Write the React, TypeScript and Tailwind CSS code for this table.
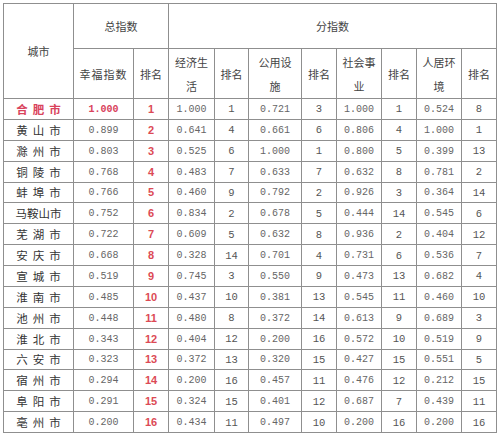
import React from "react";

type Row = [string, string, number, string, number, string, number, string, number, string, number];

const rows: Row[] = [
  ["合肥市", "1.000", 1, "1.000", 1, "0.721", 3, "1.000", 1, "0.524", 8],
  ["黄山市", "0.899", 2, "0.641", 4, "0.661", 6, "0.806", 4, "1.000", 1],
  ["滁州市", "0.803", 3, "0.525", 6, "1.000", 1, "0.800", 5, "0.399", 13],
  ["铜陵市", "0.768", 4, "0.483", 7, "0.633", 7, "0.632", 8, "0.781", 2],
  ["蚌埠市", "0.766", 5, "0.460", 9, "0.792", 2, "0.926", 3, "0.364", 14],
  ["马鞍山市", "0.752", 6, "0.834", 2, "0.678", 5, "0.444", 14, "0.545", 6],
  ["芜湖市", "0.722", 7, "0.609", 5, "0.632", 8, "0.936", 2, "0.404", 12],
  ["安庆市", "0.668", 8, "0.328", 14, "0.701", 4, "0.731", 6, "0.536", 7],
  ["宣城市", "0.519", 9, "0.745", 3, "0.550", 9, "0.473", 13, "0.682", 4],
  ["淮南市", "0.485", 10, "0.437", 10, "0.381", 13, "0.545", 11, "0.460", 10],
  ["池州市", "0.448", 11, "0.480", 8, "0.372", 14, "0.613", 9, "0.689", 3],
  ["淮北市", "0.343", 12, "0.404", 12, "0.200", 16, "0.572", 10, "0.519", 9],
  ["六安市", "0.323", 13, "0.372", 13, "0.320", 15, "0.427", 15, "0.551", 5],
  ["宿州市", "0.294", 14, "0.200", 16, "0.457", 11, "0.476", 12, "0.212", 15],
  ["阜阳市", "0.291", 15, "0.324", 15, "0.401", 12, "0.687", 7, "0.439", 11],
  ["亳州市", "0.200", 16, "0.434", 11, "0.497", 10, "0.200", 16, "0.200", 16],
];

const cjk = "font-['Noto_Sans_CJK_SC','Noto_Sans',sans-serif]";
const mono = "font-['Liberation_Mono','DejaVu_Sans_Mono',monospace]";
const cell = "border border-[#8f8f8f] p-0 text-center align-middle";

function City({ name, red }: { name: string; red: boolean }) {
  const chars = name.split("");
  return (
    <div
      className={`flex justify-center ${chars.length === 3 ? "gap-[5px]" : "gap-0"} ${cjk} text-[11.5px] leading-[14px] ${
        red ? "font-bold text-[#d9435c]" : "text-[#333]"
      }`}
    >
      {chars.map((c, i) => (
        <span key={i}>{c}</span>
      ))}
    </div>
  );
}

function Head({ lines }: { lines: string[] }) {
  return (
    <div className={`${cjk} text-[11px] leading-[24px] text-[#444]`}>
      {lines.map((l, i) => (
        <div key={i}>{l}</div>
      ))}
    </div>
  );
}

export default function App() {
  const widths = [70, 60, 35, 46, 34, 53, 35, 45, 35, 45, 35];
  return (
    <div className="w-[500px] h-[435px] bg-white pl-[3px] pt-[3px] overflow-hidden">
      <table className="table-fixed border-collapse w-[494px] text-[11px] leading-[14px]">
        <colgroup>
          {widths.map((w, i) => (
            <col key={i} style={{ width: w }} />
          ))}
        </colgroup>
        <thead>
          <tr className="h-[45px]">
            <th rowSpan={2} className={`${cell} font-normal`}>
              <Head lines={["城市"]} />
            </th>
            <th colSpan={2} className={`${cell} font-normal`}>
              <Head lines={["总指数"]} />
            </th>
            <th colSpan={8} className={`${cell} font-normal`}>
              <Head lines={["分指数"]} />
            </th>
          </tr>
          <tr className="h-[50px]">
            <th className={`${cell} font-normal`}>
              <div className={`${cjk} text-[11px] tracking-[1px] text-[#444]`}>幸福指数</div>
            </th>
            <th className={`${cell} font-normal`}>
              <Head lines={["排名"]} />
            </th>
            <th className={`${cell} font-normal`}>
              <Head lines={["经济生", "活"]} />
            </th>
            <th className={`${cell} font-normal`}>
              <Head lines={["排名"]} />
            </th>
            <th className={`${cell} font-normal`}>
              <Head lines={["公用设", "施"]} />
            </th>
            <th className={`${cell} font-normal`}>
              <Head lines={["排名"]} />
            </th>
            <th className={`${cell} font-normal`}>
              <Head lines={["社会事", "业"]} />
            </th>
            <th className={`${cell} font-normal`}>
              <Head lines={["排名"]} />
            </th>
            <th className={`${cell} font-normal`}>
              <Head lines={["人居环", "境"]} />
            </th>
            <th className={`${cell} font-normal`}>
              <Head lines={["排名"]} />
            </th>
          </tr>
        </thead>
        <tbody>
          {rows.map((r, ri) => {
            const first = ri === 0;
            return (
              <tr key={ri} className="h-[20.875px]">
                <td className={cell}>
                  <City name={r[0]} red={first} />
                </td>
                <td className={cell}>
                  <span
                    className={`${mono} text-[10px] ${
                      first ? "font-bold text-[#d9435c]" : "text-[#666]"
                    }`}
                  >
                    {r[1]}
                  </span>
                </td>
                <td className={cell}>
                  <span className="font-['Liberation_Sans',Arial,sans-serif] text-[11px] font-bold text-[#dc4a55]">
                    {r[2]}
                  </span>
                </td>
                {[3, 5, 7, 9].map((k) => (
                  <React.Fragment key={k}>
                    <td className={cell}>
                      <span className={`${mono} text-[10px] text-[#666]`}>{r[k] as string}</span>
                    </td>
                    <td className={cell}>
                      <span className={`${mono} text-[10.5px] text-[#555]`}>{r[k + 1] as number}</span>
                    </td>
                  </React.Fragment>
                ))}
              </tr>
            );
          })}
        </tbody>
      </table>
    </div>
  );
}
